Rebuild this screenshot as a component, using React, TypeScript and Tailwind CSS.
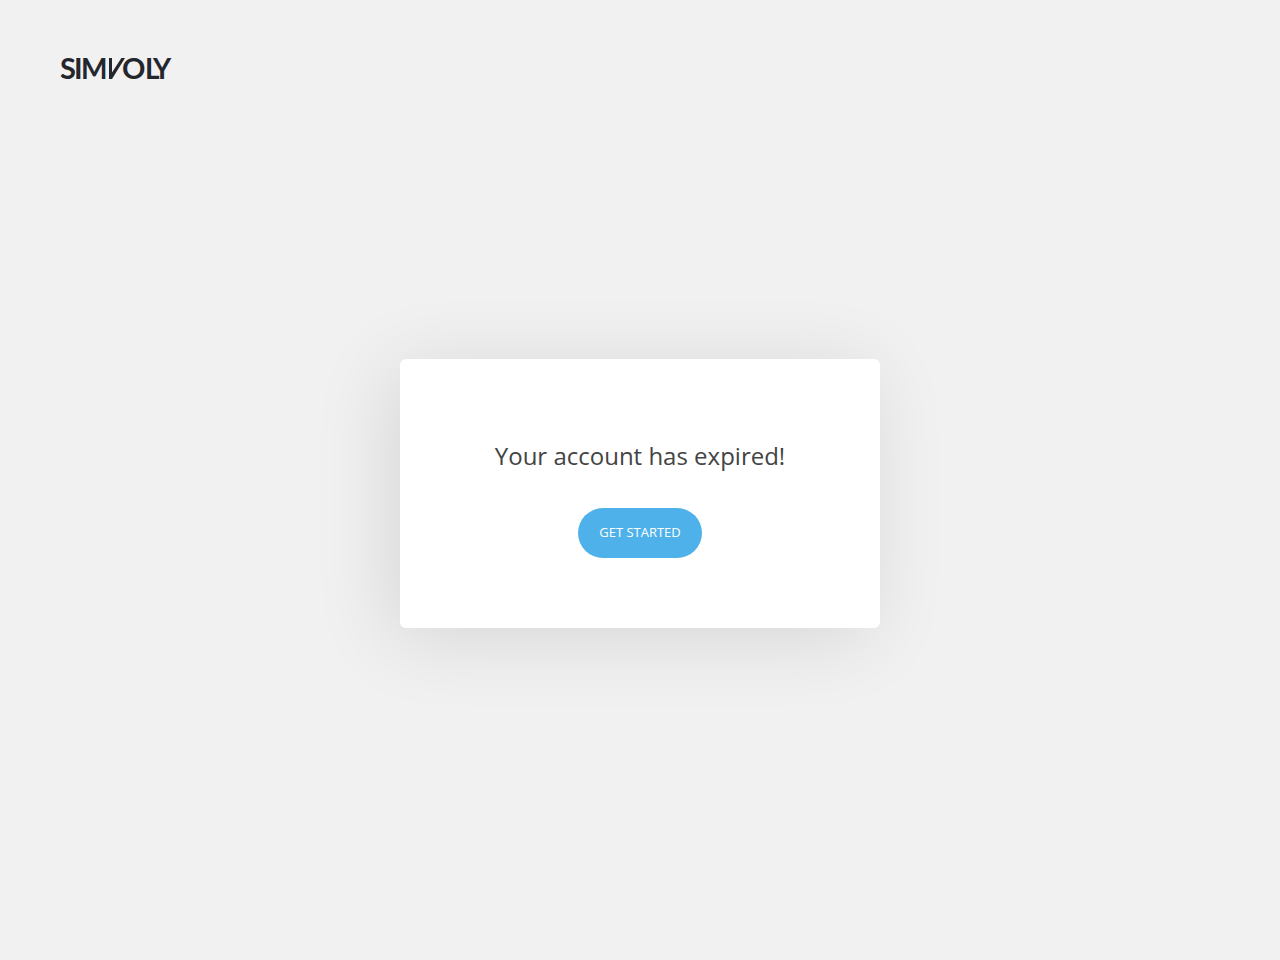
function Logo() {
  return (
    <svg
      viewBox="0 0 110 24"
      className="h-6 w-[110px] overflow-visible fill-[#24262d]"
      role="img"
      aria-label="Simvoly"
      fontFamily="Lato, sans-serif"
      fontSize="29"
      fontWeight="700"
    >
      <text x="0" y="23">S</text>
      <text x="14" y="23">I</text>
      <text x="21" y="23" fontSize="28">M</text>
      {/* The slanted mark that joins the two halves of the wordmark */}
      <path d="M49 2h3v14.6L61.4 2H65L52 23h-3z" />
      <text x="62" y="23">O</text>
      <text x="85" y="23" fontSize="28">L</text>
      <text x="93" y="23" fontSize="28">Y</text>
    </svg>
  );
}

export default function App() {
  return (
    <div className="relative flex min-h-screen flex-col bg-[#f1f1f1] font-['Open_Sans',sans-serif]">
      <header className="absolute top-0 left-0 px-[60px] py-14">
        <a href="#" className="block">
          <Logo />
        </a>
      </header>
      <main className="flex flex-1 items-center justify-center px-4 pt-[26px]">
        <section className="flex w-full max-w-[480px] flex-col items-center rounded-md bg-white px-10 pt-20 pb-[70px] shadow-[-10px_10px_80px_rgba(0,0,0,0.11)]">
          <h1 className="text-center text-2xl leading-[34px] text-[#444444]">
            Your account has expired!
          </h1>
          <button
            type="button"
            className="mt-[35px] h-[50px] cursor-pointer rounded-full bg-[#4eb1ea] px-[21px] text-[13px] text-white"
          >
            GET STARTED
          </button>
        </section>
      </main>
    </div>
  );
}
